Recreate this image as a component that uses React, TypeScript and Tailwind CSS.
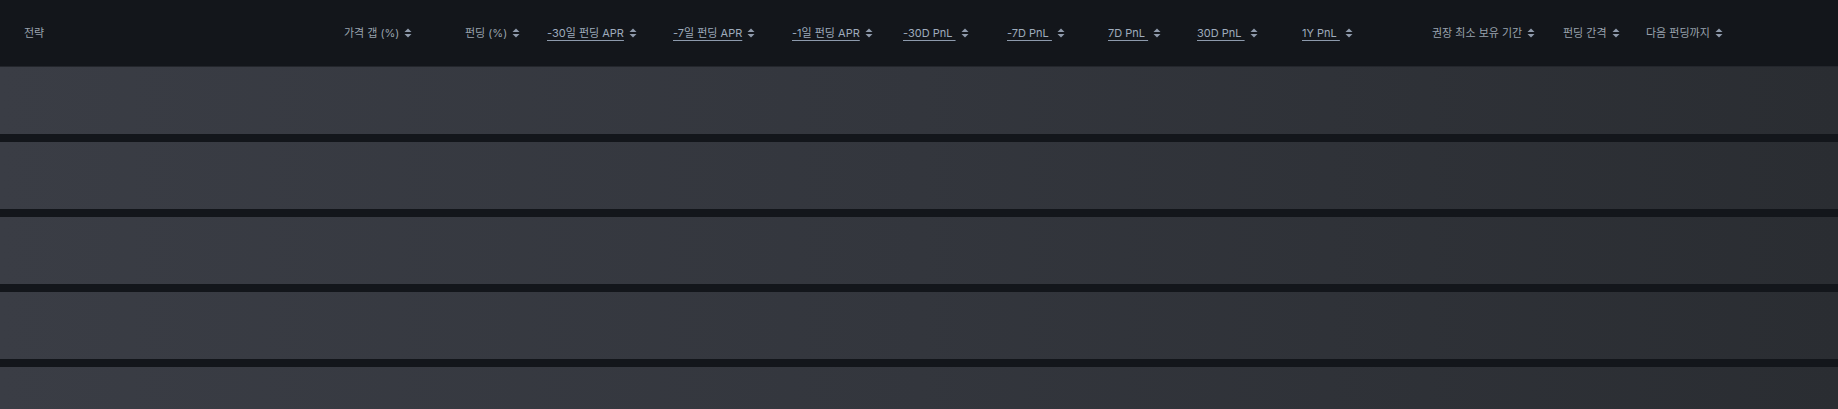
import React from "react";

type Column = { label: string; width: string; link?: boolean; sort?: boolean };

const columns: Column[] = [
  { label: "전략", width: "w-[344px] pl-6" },
  { label: "가격 갭 (%)", width: "w-[121px]", sort: true },
  { label: "펀딩 (%)", width: "w-[82px]", sort: true },
  { label: "-30일 펀딩 APR", width: "w-[126px]", link: true, sort: true },
  { label: "-7일 펀딩 APR", width: "w-[119px]", link: true, sort: true },
  { label: "-1일 펀딩 APR", width: "w-[111px]", link: true, sort: true },
  { label: "-30D PnL ", width: "w-[104px]", link: true, sort: true },
  { label: "-7D PnL ", width: "w-[101px]", link: true, sort: true },
  { label: "7D PnL ", width: "w-[89px]", link: true, sort: true },
  { label: "30D PnL ", width: "w-[105px]", link: true, sort: true },
  { label: "1Y PnL ", width: "w-[130px]", link: true, sort: true },
  { label: "권장 최소 보유 기간", width: "w-[131px]", sort: true },
  { label: "펀딩 간격", width: "w-[83px]", sort: true },
  { label: "다음 펀딩까지", width: "flex-1", sort: true },
];

const SortIcon = () => (
  <svg width="8" height="10" viewBox="0 0 8 10" className="ml-[5px] shrink-0 text-[#8f9aab]">
    <path d="M4 0.5 L7.5 4 H0.5 Z" fill="currentColor" />
    <path d="M4 9.5 L7.5 6 H0.5 Z" fill="currentColor" />
  </svg>
);

const HeaderCell = ({ col }: { col: Column }) => {
  return (
    <div className={`${col.width} shrink-0 flex items-center`}>
      {col.link
        ? <span className="whitespace-pre underline underline-offset-[3px] decoration-[#8d9aac] text-[#9eabbc]">{col.label}</span>
        : <span className="whitespace-pre text-[#9aa3ae]">{col.label}</span>}
      {col.sort && <SortIcon />}
    </div>
  );
};

const SkeletonRow = () => (
  <div className="h-[67px] w-full bg-gradient-to-r from-[#3a3d45] via-[#33363d] to-[#2a2d32]" />
);

export default function App() {
  const rows = Array.from(Array(5).keys());

  return (
    <div
      className="w-full h-[409px] overflow-hidden bg-[#13161b]"
      style={{ fontFamily: 'Inter, "Noto Sans CJK KR", sans-serif' }}
    >
      <div className="h-[66px] flex items-center text-[11px] border-b border-[#23262c] box-content">
        {columns.map((col) => <HeaderCell key={col.label} col={col} />)}
      </div>
      <div className="flex flex-col gap-2">
        {rows.map((row) => <SkeletonRow key={`skeleton-${row}`} />)}
      </div>
    </div>
  );
}
